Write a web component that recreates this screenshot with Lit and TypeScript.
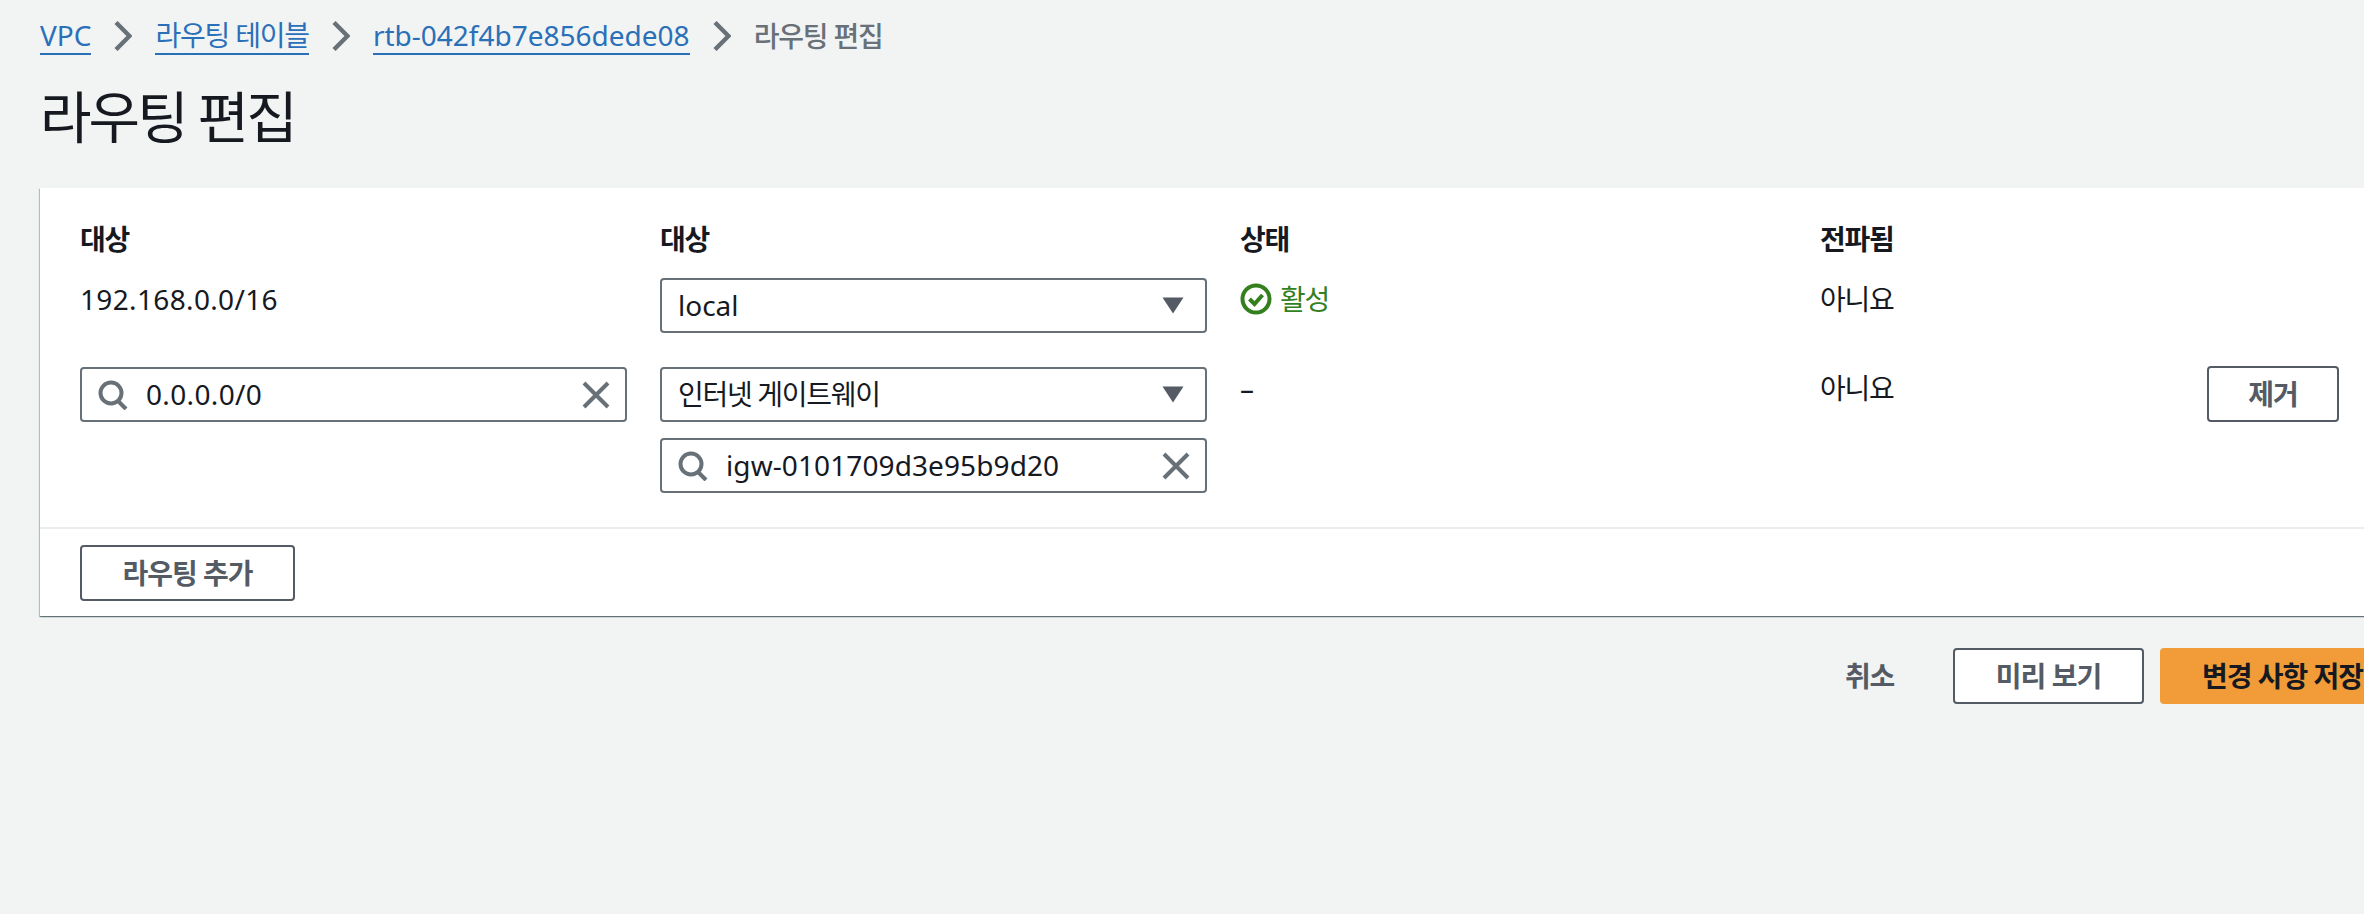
import { LitElement, html, css } from "lit";
import { customElement } from "lit/decorators.js";

const searchIcon = html`<svg class="s" viewBox="0 0 30 30"><circle cx="13" cy="13" r="10.5" fill="none" stroke="#687078" stroke-width="4"/><path d="M20 21l8 8" fill="none" stroke="#687078" stroke-width="4"/></svg>`;
const crossIcon = html`<svg class="x" viewBox="0 0 28 28"><path d="M2 2l24 24M26 2L2 26" fill="none" stroke="#687078" stroke-width="4"/></svg>`;
const caretIcon = html`<svg class="c" viewBox="0 0 22 17"><path d="M0.5 0.5h21L11 16.5z" fill="#545b64"/></svg>`;
const chev = html`<svg class="chev" viewBox="0 0 18 30"><path d="M2 1.5l13.5 13.5L2 28.5" fill="none" stroke="#687078" stroke-width="4.4"/></svg>`;

@customElement("app-root")
export class AppRoot extends LitElement {
  static styles = css`
    :host {
      display: block;
      width: 2364px;
      height: 914px;
      overflow: hidden;
      background: #f2f3f3;
      color: #16191f;
      font-family: "Noto Sans", "Noto Sans CJK KR", sans-serif;
      font-size: 28px;
      line-height: 36px;
    }
    .page { padding: 18px 0 0 40px; width: 2500px; box-sizing: border-box; }
    .crumbs { display: flex; align-items: center; height: 36px; }
    .crumbs a { color: #2a70b9; border-bottom: 2px solid #2a70b9; height: 36px; }
    .crumbs .ko { letter-spacing: -1.2px; }
    .crumbs .cur { color: #687078; font-weight: 500; letter-spacing: -1.2px; }
    .chev { width: 18px; height: 30px; margin: 0 23px; flex: none; }
    h1 { margin: 0; font-size: 56px; font-weight: 400; line-height: 64px; letter-spacing: -2.9px; padding-top: 30px; height: 66px; }
    .card { margin-top: 38px; width: 2400px; height: 428px; background: #fff; box-shadow: 0 1px 1px 0 rgba(0,28,36,.4), 1px 1px 1px 0 rgba(0,28,36,.15), -1px 1px 1px 0 rgba(0,28,36,.2); }
    .grid { display: grid; box-sizing: border-box; height: 339px; padding: 33px 40px 0; grid-template-columns: 547px 547px 547px 354px 132px; column-gap: 33px; grid-template-rows: 36px 76px 160px; align-content: start; }
    .hd { font-weight: 700; letter-spacing: -1.2px; }
    .r1 { margin-top: 21px; }
    .r2 { margin-top: 34px; }
    .stack { display: flex; flex-direction: column; gap: 16px; }
    .field { box-sizing: border-box; height: 55px; flex: none; border: 2px solid #687078; border-radius: 4px; display: flex; align-items: center; padding: 0 15px 0 16px; background: #fff; line-height: 34px; }
    .field > span { padding-bottom: 2px; }
    .val { letter-spacing: .35px; }
    .mono { letter-spacing: .1px; }
    .ko { letter-spacing: -1.3px; }
    .text { padding-top: 3px; }
    .field .s { width: 30px; height: 30px; flex: none; margin-right: 18px; }
    .field .x { width: 28px; height: 28px; flex: none; margin-left: auto; }
    .field .c { width: 22px; height: 17px; flex: none; margin-left: auto; margin-right: 6px; }
    .status { color: #347f1e; display: flex; align-items: flex-start; gap: 8px; }
    .status svg { width: 32px; height: 32px; flex: none; margin-top: 5px; }
    .btn { box-sizing: border-box; height: 56px; border: 2px solid #545b64; border-radius: 4px; background: #fff; color: #545b64; font-weight: 700; display: flex; align-items: center; justify-content: center; letter-spacing: -1px; }
    .remove { margin-top: 33px; }
    .add { width: 215px; }
    .foot { border-top: 2px solid #eaeded; padding: 16px 40px 0; }
    .actions { display: flex; align-items: center; margin-top: 32px; padding-left: 1805px; }
    .cancel { color: #545b64; font-weight: 700; letter-spacing: -1.2px; width: 108px; }
    .preview { width: 191px; }
    .primary { background: #f19c38; border: none; color: #16191f; padding: 0 40px 0 42px; margin-left: 16px; white-space: nowrap; }
  `;

  render() {
    return html`<div class="page">
      <nav class="crumbs">
        <a>VPC</a>${chev}<a class="ko">라우팅 테이블</a>${chev}<a>rtb-042f4b7e856dede08</a>${chev}<span class="cur">라우팅 편집</span>
      </nav>
      <h1>라우팅 편집</h1>
      <section class="card">
        <div class="grid">
          <div class="hd">대상</div><div class="hd">대상</div><div class="hd">상태</div><div class="hd">전파됨</div><div></div>

          <div class="r1 text val">192.168.0.0/16</div>
          <div class="r1"><div class="field"><span>local</span>${caretIcon}</div></div>
          <div class="r1 status"><svg viewBox="0 0 32 32"><circle cx="16" cy="16" r="13.5" fill="none" stroke="#347f1e" stroke-width="4"/><path d="M9.5 16l5 5 8-9" fill="none" stroke="#347f1e" stroke-width="4"/></svg><span class="ko text">활성</span></div>
          <div class="r1 text ko">아니요</div><div></div>

          <div class="r2"><div class="field">${searchIcon}<span class="val">0.0.0.0/0</span>${crossIcon}</div></div>
          <div class="r2 stack">
            <div class="field"><span class="ko">인터넷 게이트웨이</span>${caretIcon}</div>
            <div class="field">${searchIcon}<span class="mono">igw-0101709d3e95b9d20</span>${crossIcon}</div>
          </div>
          <div class="r2 text">–</div>
          <div class="r2 text ko">아니요</div>
          <div class="btn remove">제거</div>
        </div>
        <div class="foot"><div class="btn add">라우팅 추가</div></div>
      </section>
      <div class="actions">
        <span class="cancel">취소</span>
        <div class="btn preview">미리 보기</div>
        <div class="btn primary">변경 사항 저장</div>
      </div>
    </div>`;
  }
}
